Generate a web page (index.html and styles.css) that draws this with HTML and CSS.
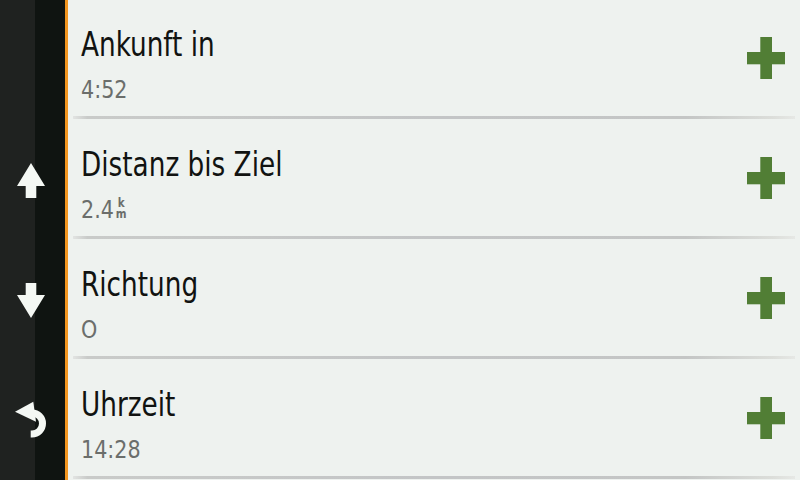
FILE: index.html
```html
<!DOCTYPE html>
<html lang="de">
<head>
<meta charset="utf-8">
<title>Datenfelder</title>
<link rel="stylesheet" href="styles.css">
</head>
<body>
<div class="screen">
  <nav class="sidebar">
    <div class="slot"></div>
    <div class="slot">
      <svg class="arrow" width="28" height="35" viewBox="0 0 28 35"><polygon points="14,0 28,23 19.3,23 19.3,35 8.7,35 8.7,23 0,23" fill="#f4f8f4"/></svg>
    </div>
    <div class="slot">
      <svg class="arrow" width="28" height="35" viewBox="0 0 28 35"><polygon points="8.7,0 19.3,0 19.3,12 28,12 14,35 0,12 8.7,12" fill="#f4f8f4"/></svg>
    </div>
    <div class="slot">
      <svg class="back" width="40" height="40" viewBox="10 400 40 40"><polygon points="15,411.7 33.3,401.7 36,421.7" fill="#f4f8f4"/><path d="M30 413 H32 A10.5 10.5 0 0 1 32 434 H30.7" fill="none" stroke="#f4f8f4" stroke-width="7"/></svg>
    </div>
  </nav>
  <main class="list">
    <section class="row">
      <div class="row-body">
        <div class="text">
          <div class="title">Ankunft in</div>
          <div class="value">4:52</div>
        </div>
        <svg class="plus" width="38" height="42" viewBox="0 0 38 42"><rect x="13.3" y="0" width="11.7" height="42" fill="#517e35"/><rect x="0" y="15" width="38" height="12.3" fill="#517e35"/></svg>
      </div>
      <div class="sep"></div>
    </section>
    <section class="row">
      <div class="row-body">
        <div class="text">
          <div class="title">Distanz bis Ziel</div>
          <div class="value">2.4<span class="unit"><span class="u">k</span><span class="u">m</span></span></div>
        </div>
        <svg class="plus" width="38" height="42" viewBox="0 0 38 42"><rect x="13.3" y="0" width="11.7" height="42" fill="#517e35"/><rect x="0" y="15" width="38" height="12.3" fill="#517e35"/></svg>
      </div>
      <div class="sep"></div>
    </section>
    <section class="row">
      <div class="row-body">
        <div class="text">
          <div class="title">Richtung</div>
          <div class="value">O</div>
        </div>
        <svg class="plus" width="38" height="42" viewBox="0 0 38 42"><rect x="13.3" y="0" width="11.7" height="42" fill="#517e35"/><rect x="0" y="15" width="38" height="12.3" fill="#517e35"/></svg>
      </div>
      <div class="sep"></div>
    </section>
    <section class="row">
      <div class="row-body">
        <div class="text">
          <div class="title">Uhrzeit</div>
          <div class="value">14:28</div>
        </div>
        <svg class="plus" width="38" height="42" viewBox="0 0 38 42"><rect x="13.3" y="0" width="11.7" height="42" fill="#517e35"/><rect x="0" y="15" width="38" height="12.3" fill="#517e35"/></svg>
      </div>
      <div class="sep"></div>
    </section>
  </main>
</div>
</body>
</html>
```
FILE: styles.css
```css
* { box-sizing: border-box; }
html, body { margin: 0; padding: 0; }
body {
  width: 800px;
  height: 480px;
  overflow: hidden;
  background: #eef2ef;
  font-family: "DejaVu Sans Condensed", "DejaVu Sans", sans-serif;
}
.screen {
  display: flex;
  width: 800px;
  height: 480px;
}
.sidebar {
  width: 68px;
  flex: none;
  display: flex;
  flex-direction: column;
  background: linear-gradient(to right, #1f2220 0, #1f2220 35px, #0f1411 35px, #0f1411 65px);
  border-right: 3px solid #f29620;
}
.slot {
  height: 120px;
  display: flex;
  align-items: center;
  justify-content: center;
  padding-right: 3px;
}
.slot .back { margin-left: -3px; }
.list {
  flex: 1;
  display: flex;
  flex-direction: column;
}
.row {
  height: 120px;
  display: flex;
  flex-direction: column;
}
.row-body {
  height: 116px;
  display: flex;
  justify-content: space-between;
  align-items: center;
  padding: 0 15px 0 13px;
}
.text {
  align-self: flex-start;
  padding-top: 24px;
}
.title {
  font-size: 34px;
  line-height: 40px;
  color: #111311;
  transform: scaleX(0.86);
  transform-origin: left center;
  white-space: nowrap;
}
.value {
  margin-top: 11px;
  font-size: 25px;
  line-height: 30px;
  color: #6b6e6b;
  transform: scaleX(0.92);
  transform-origin: left center;
  white-space: nowrap;
}
.unit {
  display: inline-block;
  margin-left: 2px;
  font-size: 12.5px;
  line-height: 11px;
  color: #6b6e6b;
  text-align: center;
  font-weight: 600;
}
.u { display: block; }
.plus { display: block; }
.sep {
  height: 3px;
  margin: 0 5px;
  background: linear-gradient(to right, #e2e4e2 0, #c9cbc9 2%, #c3c5c6 50%, #c4c6c5 85%, #dcdeda 97%, #e6e8e5 100%);
}
```
